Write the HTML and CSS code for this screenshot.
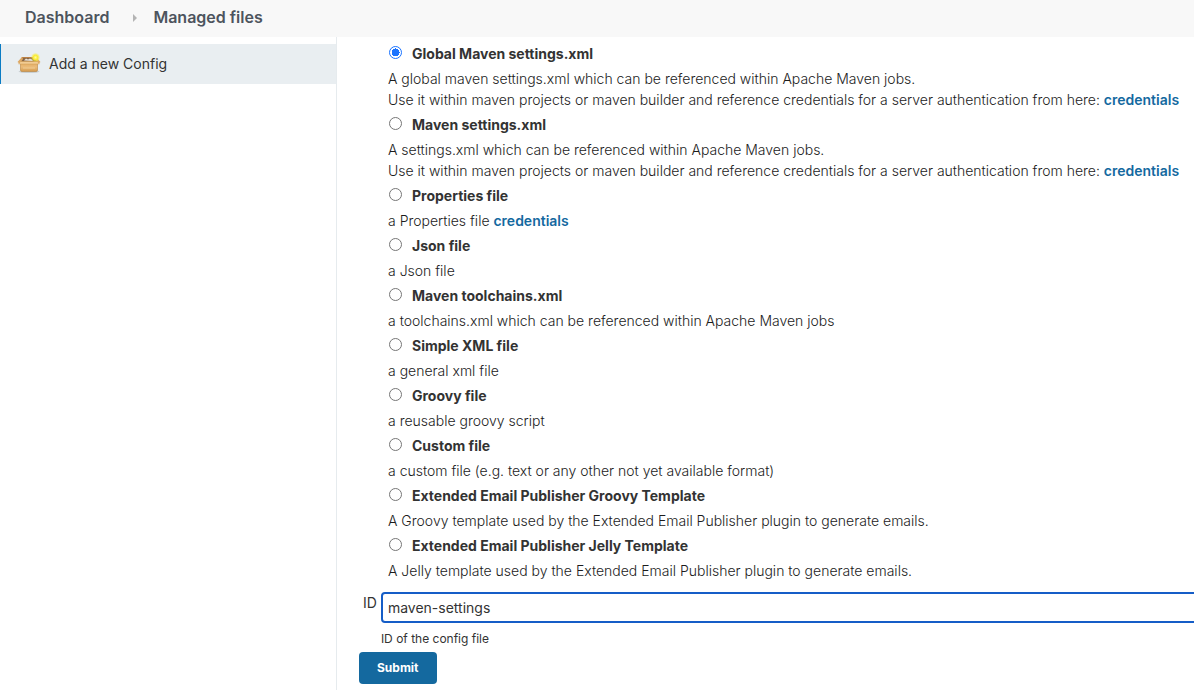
FILE: index.html
```html
<!DOCTYPE html>
<html lang="en">
<head>
<meta charset="utf-8">
<title>Managed files</title>
<link rel="stylesheet" href="styles.css">
</head>
<body>
<nav class="breadcrumbs" aria-label="Breadcrumb">
  <a href="#dashboard">Dashboard</a>
  <svg class="separator" width="4" height="8" viewBox="0 0 4 8" aria-hidden="true"><path d="M0 0l4 4-4 4z" fill="#b4b4b4"/></svg>
  <a href="#files">Managed files</a>
</nav>
<div class="layout">
  <aside class="sidebar">
    <a class="task" href="#add">
      <svg class="task-icon" width="24" height="24" viewBox="0 0 24 24" aria-hidden="true">
        <defs>
          <linearGradient id="front" x1="0" y1="0" x2="0" y2="1"><stop offset="0" stop-color="#e0a85e"/><stop offset=".5" stop-color="#ebbc7a"/><stop offset="1" stop-color="#d39a4e"/></linearGradient>
          <radialGradient id="glow"><stop offset="0" stop-color="#fffb9c"/><stop offset=".5" stop-color="#f9ec35"/><stop offset="1" stop-color="#f8ed45" stop-opacity=".15"/></radialGradient>
        </defs>
        <ellipse cx="12" cy="19.600" rx="10.500" ry="1.500" fill="#8d9599" opacity=".35"/>
        <path d="M5 5h14l3 5H2z" fill="#b98045"/>
        <path d="M6 6h12l1.500 3.500h-15z" fill="#8a6644"/>
        <path d="M7 8.500l2-2 2 1 2-1 2 1 1 1.500z" fill="#e8e3d9"/>
        <path d="M5 5L.5 10l2 1.500L6 7zM19 5l4.500 5-2 1.500L18 7z" fill="#dda864"/>
        <path d="M3.500 10.500h17v7.500q0 1.500-1.500 1.500H5q-1.500 0-1.500-1.500z" fill="url(#front)" stroke="#bb8440" stroke-width=".6"/>
        <path d="M3.500 9.500h17l2 2.500h-21z" fill="#f2cb92" stroke="#c9974f" stroke-width=".4"/>
        <path d="M6 16h12" stroke="#f0cc94"/>
        <circle cx="18.500" cy="5.500" r="4.500" fill="url(#glow)"/>
      </svg>
      <span>Add a new Config</span>
    </a>
  </aside>
  <main class="content">
    <form>
      <div class="options">
        <div class="option"><label><input type="radio" name="type" checked><span>Global Maven settings.xml</span></label>
          <p>A global maven settings.xml which can be referenced within Apache Maven jobs.<br>Use it within maven projects or maven builder and reference credentials for a server authentication from here: <a href="#credentials">credentials</a></p></div>
        <div class="option"><label><input type="radio" name="type"><span>Maven settings.xml</span></label>
          <p>A settings.xml which can be referenced within Apache Maven jobs.<br>Use it within maven projects or maven builder and reference credentials for a server authentication from here: <a href="#credentials">credentials</a></p></div>
        <div class="option"><label><input type="radio" name="type"><span>Properties file</span></label>
          <p>a Properties file <a href="#credentials">credentials</a></p></div>
        <div class="option"><label><input type="radio" name="type"><span>Json file</span></label>
          <p>a Json file</p></div>
        <div class="option"><label><input type="radio" name="type"><span>Maven toolchains.xml</span></label>
          <p>a toolchains.xml which can be referenced within Apache Maven jobs</p></div>
        <div class="option"><label><input type="radio" name="type"><span>Simple XML file</span></label>
          <p>a general xml file</p></div>
        <div class="option"><label><input type="radio" name="type"><span>Groovy file</span></label>
          <p>a reusable groovy script</p></div>
        <div class="option"><label><input type="radio" name="type"><span>Custom file</span></label>
          <p>a custom file (e.g. text or any other not yet available format)</p></div>
        <div class="option"><label><input type="radio" name="type"><span>Extended Email Publisher Groovy Template</span></label>
          <p>A Groovy template used by the Extended Email Publisher plugin to generate emails.</p></div>
        <div class="option"><label><input type="radio" name="type"><span>Extended Email Publisher Jelly Template</span></label>
          <p>A Jelly template used by the Extended Email Publisher plugin to generate emails.</p></div>
      </div>
      <div class="field">
        <label class="field-label" for="config-id">ID</label>
        <div class="field-body">
          <input class="text-input" id="config-id" type="text" value="maven-settings" aria-describedby="id-help">
          <div class="help" id="id-help">ID of the config file</div>
        </div>
      </div>
      <button class="submit" type="submit">Submit</button>
    </form>
  </main>
</div>
</body>
</html>
```

FILE: styles.css
```css
* { box-sizing: border-box; }

body {
  display: flex;
  flex-direction: column;
  min-height: 100vh;
  margin: 0;
  overflow: hidden;
  background: #fff;
  color: #333;
  font: 14px/21px Inter, "Liberation Sans", sans-serif;
}

a { color: #14699f; text-decoration: none; }

.breadcrumbs {
  display: flex;
  align-items: center;
  gap: 24px;
  padding: 7px 25px 9px;
  background: #f8f8f8;
  font-size: 16px;
  font-weight: 600;
}
.breadcrumbs a { color: #4d545d; }
.separator { margin-right: -8px; }

.layout { display: flex; flex: 1; }

.sidebar {
  flex: 0 0 337px;
  padding-top: 7px;
  border-right: 1px solid #e6ebee;
}
.task {
  display: flex;
  align-items: center;
  gap: 8px;
  height: 40px;
  padding: 0 16px 1px;
  border-left: 1px solid #0b7cc4;
  background: #e9eef1;
  color: #333;
}

.content { flex: 1; min-width: 0; padding: 2px 0 6px 22px; }

.options { padding-left: 29px; }
.option label {
  display: flex;
  align-items: center;
  gap: 10px;
  height: 29px;
  font-weight: 700;
}
.option input {
  appearance: none;
  width: 13px;
  height: 13px;
  margin: 0 0 2px 1px;
  border: 1px solid #767676;
  border-radius: 50%;
  background: #fff;
}
.option input:checked {
  border-color: #1a73ff;
  background: radial-gradient(circle, #1a73ff 0 4px, #fff 4px);
}
.option p { margin: 0; color: #1c1c1c; font-weight: 300; white-space: nowrap; }
.option a { font-weight: 600; }

.field { display: flex; gap: 4px; margin: 11px -4px 0 4px; }
.field-label { line-height: 22px; }
.field-body { flex: 1; }
.text-input {
  display: block;
  width: 100%;
  height: 31px;
  padding: 0 5px;
  border: 2px solid #155dc7;
  border-radius: 4px;
  outline: none;
  background: #fff;
  color: #333;
  font: inherit;
}
.help { margin-top: 6px; font-size: 12px; line-height: 20px; }

.submit {
  display: block;
  margin-top: 3px;
  padding: 6px 18px;
  border: 0;
  border-radius: 4px;
  background: #14699f;
  color: #fff;
  font: 700 12px/20px Inter, "Liberation Sans", sans-serif;
}
```
